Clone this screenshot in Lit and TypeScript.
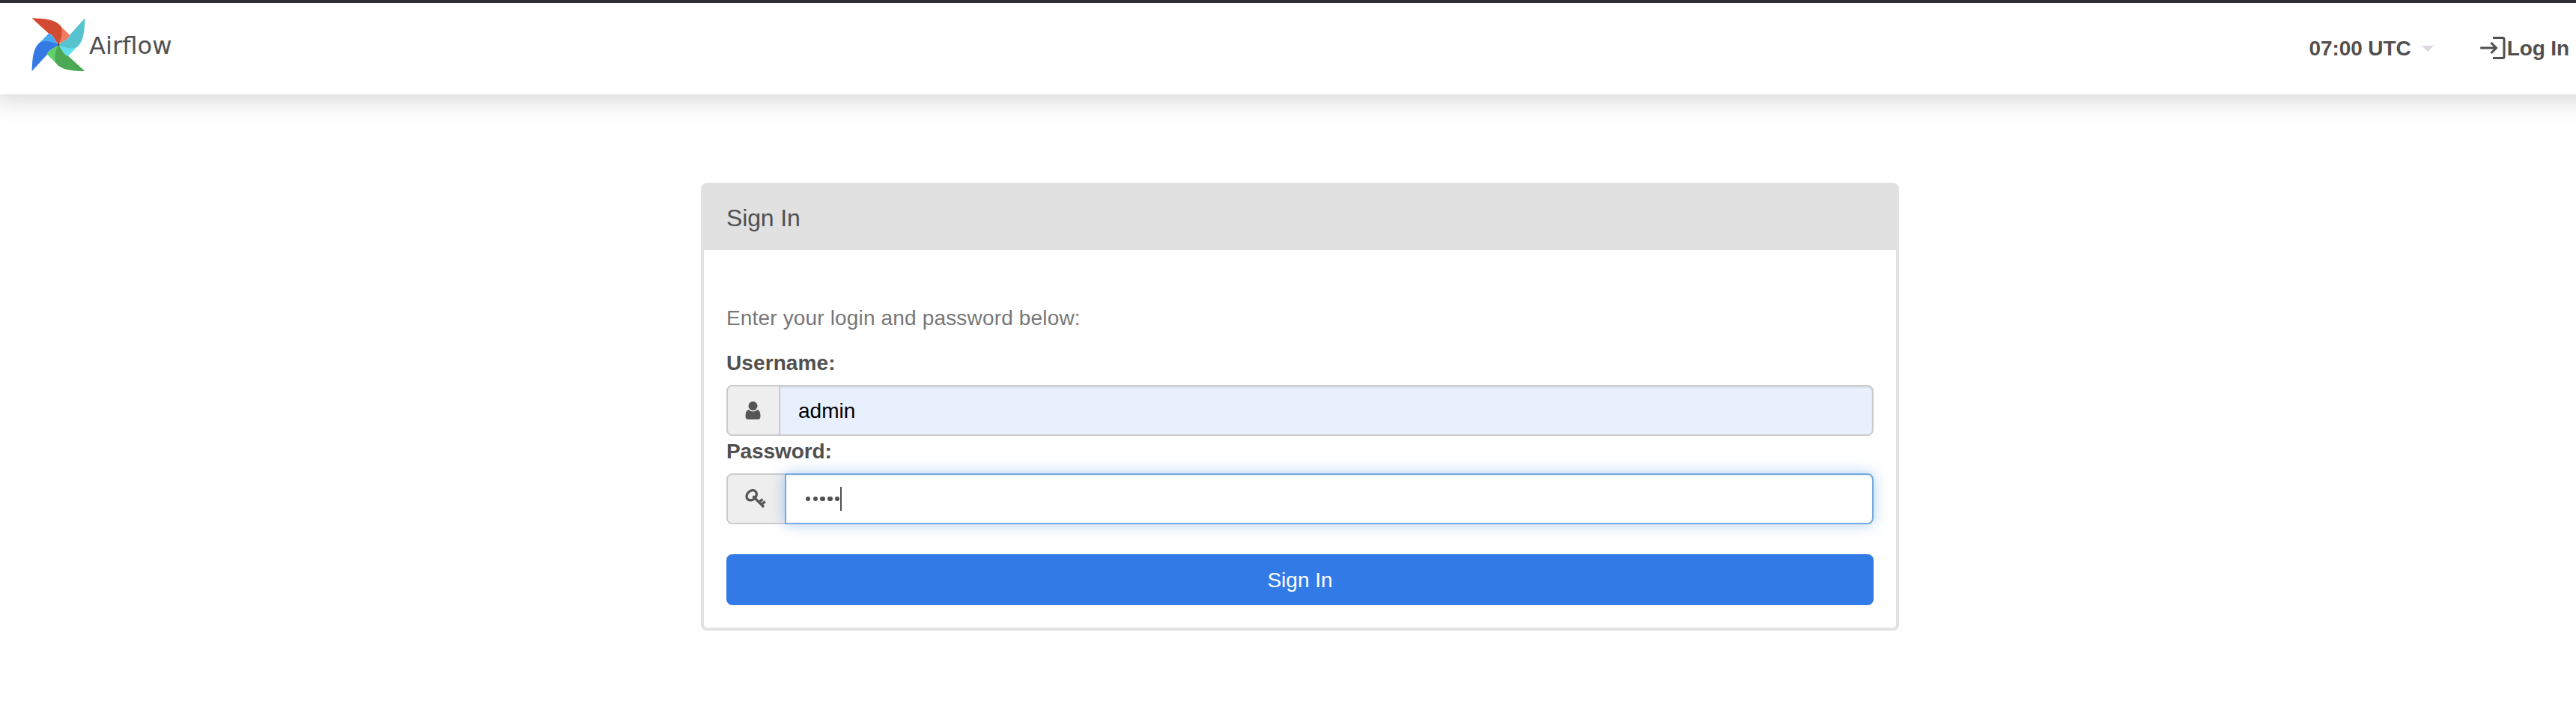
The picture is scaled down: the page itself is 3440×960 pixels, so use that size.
import { LitElement, html, css, svg } from "lit";
import { customElement } from "lit/decorators.js";

const BLADES = [
  { angle: 0, dark: "#d24a31", light: "#f07a60" },
  { angle: 90, dark: "#56c3cf", light: "#61e0eb" },
  { angle: 180, dark: "#4ba854", light: "#5fd16b" },
  { angle: 270, dark: "#337ae5", light: "#4ba8f3" },
];

@customElement("airflow-navbar")
class AirflowNavbar extends LitElement {
  static styles = css`
    :host {
      display: block;
      font-family: "Liberation Sans", Arial, sans-serif;
      color: #51504f;
    }
    .bar {
      box-sizing: border-box;
      height: 126px;
      margin: 0 -40px 0 -8px;
      border-top: 4px solid #2f3036;
      background: #fff;
      box-shadow: 0 8px 32px rgba(0, 0, 0, 0.16);
      display: flex;
      justify-content: space-between;
      padding: 0 49px 0 50px;
    }
    .brand {
      display: flex;
      align-items: flex-start;
      gap: 5px;
      padding-top: 20px;
    }
    .pinwheel {
      width: 72px;
      height: 72px;
    }
    .name {
      font-family: "DejaVu Sans", sans-serif;
      font-size: 32.2px;
      line-height: 46px;
      padding-top: 14px;
    }
    .links {
      display: flex;
      align-items: center;
      height: 120px;
      font-size: 28px;
      font-weight: bold;
    }
    .text {
      padding-top: 2px;
      letter-spacing: -0.1px;
    }
    .caret {
      width: 16px;
      height: 8px;
      margin: 2px 62px 0 14px;
    }
    .login {
      width: 34px;
      height: 30px;
      margin-right: 2px;
    }
  `;

  render() {
    return html`
      <nav class="bar">
        <div class="brand">
          <svg class="pinwheel" viewBox="0 0 72 72">
            ${BLADES.map(
              (b) => svg`<g transform="rotate(${b.angle} 36 35.7)">
                <path fill=${b.light} d="M38.500 10.500L51 22.700C50 29 41.500 31 36 35.700Z" />
                <path fill=${b.dark} d="M.6 .3C16 .8 32 1.500 39.300 11C42 19 40.500 26 36 35.700C31.300 30.200 29.300 21.700 23 20.700Z" />
              </g>`
            )}
            <circle cx="36" cy="35.700" r="1.500" fill="#51504f" />
          </svg>
          <span class="name">Airflow</span>
        </div>
        <div class="links">
          <span class="text">07:00 UTC</span>
          <svg class="caret" viewBox="0 0 16 8"><path fill="#ddd5df" d="M0 0H16L8 8Z" /></svg>
          <svg class="login" viewBox="0 0 34 30" fill="none" stroke="#51504f" stroke-width="3">
            <path d="M.2 15H21.500M14.500 8L21.500 15L14.500 22M17 1.500H30Q32 1.500 32 3.500V26.500Q32 28.500 30 28.500H17" />
          </svg>
          <span class="text">Log In</span>
        </div>
      </nav>
    `;
  }
}

@customElement("login-panel")
class LoginPanel extends LitElement {
  static styles = css`
    :host {
      display: block;
      font-family: "Liberation Sans", Arial, sans-serif;
      color: #51504f;
    }
    .panel {
      box-sizing: border-box;
      width: 1600px;
      height: 598px;
      border: 4px solid #e1e1e1;
      border-radius: 8px;
      background: #fff;
    }
    .heading {
      box-sizing: border-box;
      height: 86px;
      padding: 25px 30px 0;
      background: #e1e1e1;
      font-size: 32px;
      line-height: 37px;
      letter-spacing: -0.15px;
    }
    .body {
      padding: 71px 30px 0;
      font-size: 28px;
      line-height: 40px;
    }
    .hint {
      margin-bottom: 20px;
      color: #777;
      letter-spacing: 0.16px;
    }
    .label {
      display: block;
      height: 50px;
      line-height: 42px;
      font-weight: bold;
      letter-spacing: -0.1px;
    }
    .first {
      height: 49px;
      line-height: 40px;
      letter-spacing: 0.1px;
    }
    .group {
      display: flex;
      height: 68px;
    }
    .addon {
      box-sizing: border-box;
      width: 70px;
      border: 2px solid #ccc;
      border-right: 0;
      border-radius: 8px 0 0 8px;
      background: #eee;
      display: flex;
      align-items: center;
      padding-left: 23px;
    }
    .addon.wide {
      width: 78px;
    }
    .user {
      width: 21px;
      height: 24px;
    }
    .key {
      width: 28px;
      height: 26px;
    }
    .field {
      flex: 1;
      box-sizing: border-box;
      border: 2px solid #ccc;
      border-radius: 0 8px 8px 0;
      display: flex;
      align-items: center;
      padding: 0 24px;
    }
    .filled {
      padding-top: 1px;
      background: #e8effd;
      color: #000;
      box-shadow: inset 0 2px 2px rgba(0, 0, 0, 0.075);
    }
    .focused {
      padding-left: 26px;
      border-color: #74a9e0;
      box-shadow: inset 0 2px 2px rgba(0, 0, 0, 0.05), 0 0 18px rgba(90, 155, 230, 0.5);
    }
    .dots {
      display: flex;
      gap: 3.35px;
    }
    .dot {
      width: 6.4px;
      height: 6.4px;
      border-radius: 50%;
      background: #51504f;
    }
    .cursor {
      width: 2px;
      height: 32px;
      margin-left: 0.6px;
      background: #51504f;
    }
    .submit {
      display: block;
      width: 100%;
      height: 68px;
      margin-top: 40px;
      padding: 2px 0 0;
      border: 0;
      border-radius: 8px;
      background: #327be6;
      color: #fff;
      font: 28px "Liberation Sans", Arial, sans-serif;
    }
  `;

  render() {
    return html`
      <section class="panel">
        <div class="heading">Sign In</div>
        <div class="body">
          <div class="hint">Enter your login and password below:</div>
          <span class="label first">Username:</span>
          <div class="group">
            <span class="addon">
              <svg class="user" viewBox="0 0 21 24" fill="#555">
                <circle cx="10.500" cy="6" r="6" />
                <path d="M4.500 11Q10.500 16 16.500 11Q20.500 12 20.500 19.500Q20.500 24 17 24H4Q.5 24 .5 19.500Q.5 12 4.500 11Z" />
              </svg>
            </span>
            <div class="field filled">admin</div>
          </div>
          <span class="label">Password:</span>
          <div class="group">
            <span class="addon wide">
              <svg class="key" viewBox="0 0 28 26" fill="none" stroke="#555" stroke-width="3.300">
                <ellipse cx="8.700" cy="8.300" rx="7.400" ry="5.800" transform="rotate(-45 8.700 8.300)" />
                <path d="M10.500 9.500L25 24M18.500 17.500L23.500 13.500M21.800 20.800L26.800 16.500" />
              </svg>
            </span>
            <div class="field focused">
              <span class="dots">${[0, 1, 2, 3, 4].map(() => html`<i class="dot"></i>`)}</span>
              <i class="cursor"></i>
            </div>
          </div>
          <button class="submit">Sign In</button>
        </div>
      </section>
    `;
  }
}

@customElement("app-root")
class AppRoot extends LitElement {
  static styles = css`
    :host {
      display: block;
      height: 960px;
      overflow: hidden;
      background: #fff;
    }
    .content {
      padding: 118px 0 0 936px;
    }
  `;

  render() {
    return html`
      <airflow-navbar></airflow-navbar>
      <main class="content"><login-panel></login-panel></main>
    `;
  }
}
